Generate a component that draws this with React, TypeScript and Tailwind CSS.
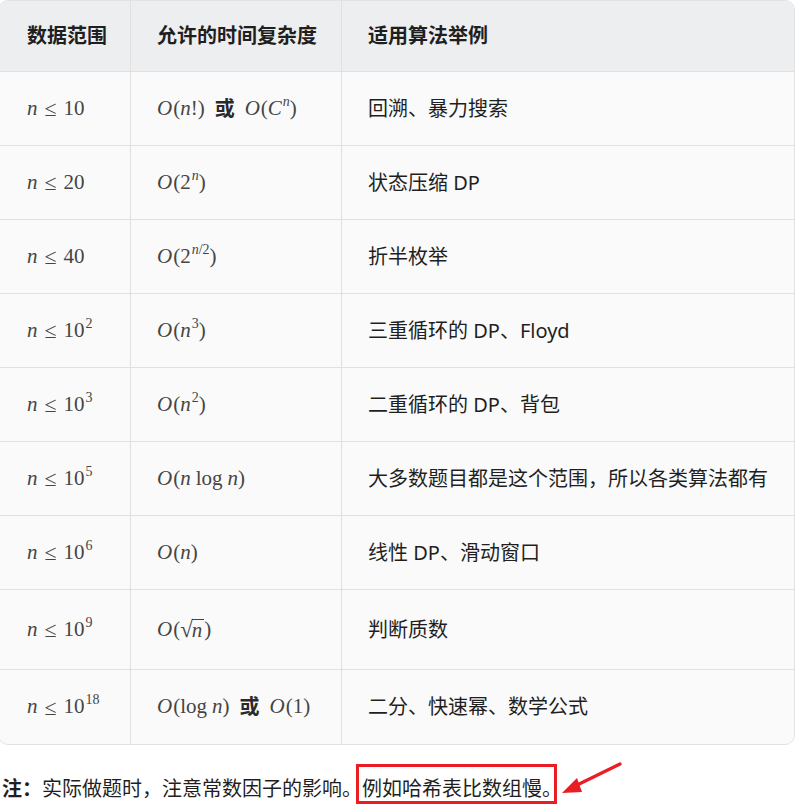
import React from "react";

const CJK = "font-['Noto_Sans','Noto_Sans_CJK_SC',sans-serif]";
const MATH = "font-['Liberation_Serif',serif] text-[21px] text-[#454545] whitespace-nowrap";

function O() {
  return <span className="italic mr-[1px]">O</span>;
}
function N() {
  return <span className="italic">n</span>;
}
function Sup({ children }: { children: React.ReactNode }) {
  return <sup className="text-[14px] top-[-0.5em] ml-[1px]">{children}</sup>;
}
function Le() {
  return <span className="mx-[7px] text-[22px]">≤</span>;
}
function Or() {
  return <span className={`${CJK} font-semibold text-[20px] text-[#2a2a2a] mx-[10px]`}>或</span>;
}

type Row = { a: React.ReactNode; b: React.ReactNode; c: string; h: string };

const rows: Row[] = [
  {
    a: (<><N /><Le />10</>),
    b: (<><O />(<N />!)<Or /><O />(<span className="italic">C</span><Sup><span className="italic">n</span></Sup>)</>),
    c: "回溯、暴力搜索",
    h: "h-[74px]",
  },
  { a: (<><N /><Le />20</>), b: (<><O />(2<Sup><span className="italic">n</span></Sup>)</>), c: "状态压缩 DP", h: "h-[74px]" },
  { a: (<><N /><Le />40</>), b: (<><O />(2<Sup><span className="italic">n</span>/2</Sup>)</>), c: "折半枚举", h: "h-[74px]" },
  { a: (<><N /><Le />10<Sup>2</Sup></>), b: (<><O />(<N /><Sup>3</Sup>)</>), c: "三重循环的 DP、Floyd", h: "h-[74px]" },
  { a: (<><N /><Le />10<Sup>3</Sup></>), b: (<><O />(<N /><Sup>2</Sup>)</>), c: "二重循环的 DP、背包", h: "h-[74px]" },
  {
    a: (<><N /><Le />10<Sup>5</Sup></>),
    b: (<><O />(<N /><span className="ml-[5px] mr-[5px]">log</span><N />)</>),
    c: "大多数题目都是这个范围，所以各类算法都有",
    h: "h-[74px]",
  },
  { a: (<><N /><Le />10<Sup>6</Sup></>), b: (<><O />(<N />)</>), c: "线性 DP、滑动窗口", h: "h-[74px]" },
  {
    a: (<><N /><Le />10<Sup>9</Sup></>),
    b: (
      <>
        <O />(<span className="inline-flex items-end"><span className="text-[23px] leading-none">√</span><span className="italic border-t border-[#454545] leading-[21px] pr-[2px] -ml-[1px]">n</span></span>)
      </>
    ),
    c: "判断质数",
    h: "h-[80px]",
  },
  {
    a: (<><N /><Le />10<Sup>18</Sup></>),
    b: (<><O />(<span className="mr-[5px]">log</span><N />)<Or /><O />(1)</>),
    c: "二分、快速幂、数学公式",
    h: "h-[74px]",
  },
];

export default function App() {
  return (
    <div className={`w-[795px] h-[812px] bg-white overflow-hidden ${CJK} text-[#1f1f1f]`}>
      <div className="ml-[-2px] w-[797px] border border-[#e2e2e2] rounded-[10px] overflow-hidden bg-[#fafafa]">
        <div className="grid grid-cols-[132px_211px_1fr] h-[71px] bg-[#edeef0] border-b border-[#e0e0e0] text-[20px] font-bold text-[#1f1f1f]">
          <div className="flex items-center pl-[28px] border-r border-[#e0e0e0]">数据范围</div>
          <div className="flex items-center pl-[26px] border-r border-[#e0e0e0]">允许的时间复杂度</div>
          <div className="flex items-center pl-[26px]">适用算法举例</div>
        </div>
        {rows.map((r, i) => (
          <div
            key={i}
            className={`grid grid-cols-[132px_211px_1fr] ${r.h} ${i < rows.length - 1 ? "border-b border-[#e0e0e0]" : ""}`}
          >
            <div className={`flex items-center pl-[28px] border-r border-[#e0e0e0] ${MATH}`}>{r.a}</div>
            <div className={`flex items-center pl-[26px] border-r border-[#e0e0e0] ${MATH}`}>{r.b}</div>
            <div className="flex items-center pl-[26px] text-[20px] whitespace-nowrap">{r.c}</div>
          </div>
        ))}
      </div>
      <div className="relative mt-[24px] h-[40px] flex items-center pl-[2px] text-[20px] whitespace-nowrap">
        <span className="font-bold">注：</span>
        <span>实际做题时，注意常数因子的影响。</span>
        <span className="relative">
          例如哈希表比数组慢。
          <span className="absolute left-[-6px] top-[-10px] w-[201px] h-[40px] border-[3px] border-[#ea1c24]" />
        </span>
        <svg className="absolute left-[555px] top-[-8px]" width="75" height="42" viewBox="0 0 75 42">
          <line x1="65" y1="3" x2="16" y2="27" stroke="#ea1c24" strokeWidth="3.2" strokeLinecap="round" />
          <polygon points="7,32 22,17 27,31" fill="#ea1c24" />
        </svg>
      </div>
    </div>
  );
}
